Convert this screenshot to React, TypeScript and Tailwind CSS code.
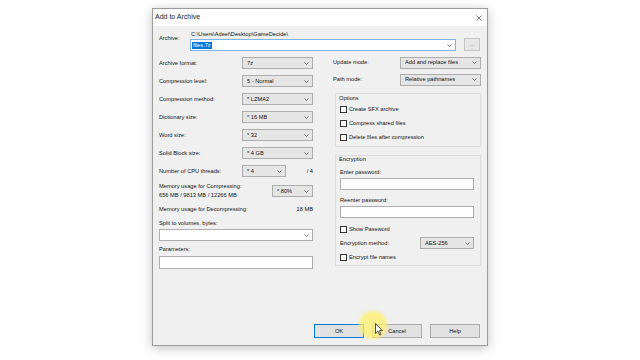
import React from 'react';

const font = { fontFamily: '"Liberation Sans", Arial, sans-serif' };

function Chevron() {
  return (
    <svg width="5" height="3" viewBox="0 0 5 3" className="shrink-0">
      <polyline points="0.5,0.5 2.5,2.5 4.5,0.5" fill="none" stroke="#555" strokeWidth="0.8" />
    </svg>
  );
}

function Select({ value, className = '' }: { value: string; className?: string }) {
  return (
    <div className={`h-[12px] bg-[#e5e5e5] border border-[#adadad] flex items-center justify-between pl-[4px] pr-[3px] ${className}`}>
      <span className="truncate">{value}</span>
      <Chevron />
    </div>
  );
}

function Check({ label }: { label: string }) {
  return (
    <div className="h-[14px] flex items-center gap-[2px]">
      <div className="w-[7px] h-[7px] bg-white border border-[#333]" />
      <span>{label}</span>
    </div>
  );
}

function Btn({ label, focused }: { label: string; focused?: boolean }) {
  return (
    <div
      className={`w-[50px] h-[14px] flex items-center justify-center bg-[#e1e1e1] border ${
        focused ? 'border-[#0078d7]' : 'border-[#adadad]'
      }`}
    >
      {label}
    </div>
  );
}

const leftRows = [
  ['Archive format:', '7z'],
  ['Compression level:', '5 - Normal'],
  ['Compression method:', '* LZMA2'],
  ['Dictionary size:', '* 16 MB'],
  ['Word size:', '* 32'],
  ['Solid Block size:', '* 4 GB'],
];

export default function App() {
  return (
    <div className="w-[640px] h-[360px] bg-white relative overflow-hidden text-[5.7px] text-[#111]" style={font}>
      <div className="ml-[152px] mt-[8px] w-[336px] h-[338px] border border-[#9c9c9c] shadow-[0_2px_10px_rgba(0,0,0,0.25)] flex flex-col">
        {/* Title bar */}
        <div className="h-[17px] bg-white flex items-center justify-between pl-[2px] pr-[5px] shrink-0">
          <span className="text-[7px] text-[#222]">Add to Archive</span>
          <svg width="6" height="6" viewBox="0 0 6 6">
            <path d="M0.5 0.5 L5.5 5.5 M5.5 0.5 L0.5 5.5" stroke="#444" strokeWidth="0.7" />
          </svg>
        </div>

        {/* Body */}
        <div className="flex-1 bg-[#f0f0f0] flex flex-col pl-[6px] pr-[6px]">
          {/* Archive row */}
          <div className="mt-[4px] flex">
            <div className="w-[31px] pt-[4px] leading-[9px]">Archive:</div>
            <div className="flex flex-col">
              <div className="h-[9px] leading-[9px] pl-[1px]">C:\Users\Adeel\Desktop\GameDecide\</div>
              <div className="w-[266px] h-[12px] bg-white border border-[#7eb4ea] flex items-center justify-between pl-[1px] pr-[3px]">
                <span className="bg-[#0078d7] text-white px-[1px] leading-[7px]">files.7z</span>
                <Chevron />
              </div>
            </div>
            <div className="ml-[8px] mt-[8px] w-[16px] h-[13px] bg-[#e6e6e6] border border-[#c4c4c4] flex items-center justify-center text-[#888]">
              ...
            </div>
          </div>

          <div className="mt-[3px] flex gap-[20px]">
            {/* Left column */}
            <div className="w-[154px] flex flex-col">
              {leftRows.map(([label, value]) => (
                <div key={label} className="h-[18px] flex items-center">
                  <span className="w-[83px]">{label}</span>
                  <Select value={value} className="w-[71px]" />
                </div>
              ))}
              <div className="h-[18px] flex items-center">
                <span className="w-[83px]">Number of CPU threads:</span>
                <Select value="* 4" className="w-[44px]" />
                <span className="ml-auto">/ 4</span>
              </div>

              <div className="h-[20px] flex">
                <div className="pt-[1.5px] leading-[9px]">
                  <div>Memory usage for Compressing:</div>
                  <div>656 MB / 9813 MB / 12266 MB</div>
                </div>
                <Select value="* 80%" className="w-[41px] ml-auto mt-[5px]" />
              </div>
              <div className="mt-[4px] h-[10px] flex items-center justify-between">
                <span>Memory usage for Decompressing:</span>
                <span>18 MB</span>
              </div>

              <div className="mt-[4px] h-[10px] flex items-center">Split to volumes, bytes:</div>
              <div className="mt-[1px] h-[12px] bg-white border border-[#adadad] flex items-center justify-end pr-[3px]">
                <Chevron />
              </div>

              <div className="mt-[3px] h-[10px] flex items-center">Parameters:</div>
              <div className="mt-[2px] h-[13px] bg-white border border-[#adadad]" />
            </div>

            {/* Right column */}
            <div className="w-[148px] flex flex-col">
              <div className="h-[17px] flex items-center">
                <span className="w-[67px]">Update mode:</span>
                <Select value="Add and replace files" className="w-[81px]" />
              </div>
              <div className="h-[17px] flex items-center">
                <span className="w-[67px]">Path mode:</span>
                <Select value="Relative pathnames" className="w-[81px]" />
              </div>

              <div className="mt-[5px] ml-[2px] w-[146px] h-[54px] border border-[#dcdcdc] pl-[4px] flex flex-col">
                <div className="h-[8px] leading-[8px] -ml-[1px]">Options</div>
                <Check label="Create SFX archive" />
                <Check label="Compress shared files" />
                <Check label="Delete files after compression" />
              </div>

              <div className="mt-[8px] ml-[2px] w-[146px] border border-[#dcdcdc] pl-[4px] pr-[6px] pb-[1px] flex flex-col">
                <div className="h-[6px] leading-[6px] -ml-[1px]">Encryption</div>
                <div className="mt-[6px] h-[8px] leading-[8px]">Enter password:</div>
                <div className="mt-[2px] h-[12px] bg-white border border-[#adadad]" />
                <div className="mt-[6px] h-[8px] leading-[8px]">Reenter password:</div>
                <div className="mt-[2px] h-[12px] bg-white border border-[#adadad]" />
                <div className="mt-[4px]">
                  <Check label="Show Password" />
                </div>
                <div className="h-[14px] flex items-center">
                  <span className="w-[80px]">Encryption method:</span>
                  <Select value="AES-256" className="w-[54px]" />
                </div>
                <Check label="Encrypt file names" />
              </div>
            </div>
          </div>

          <div className="flex-1" />

          {/* Buttons */}
          <div className="mb-[7px] pr-[1px] flex justify-end gap-[8px]">
            <Btn label="OK" focused />
            <Btn label="Cancel" />
            <Btn label="Help" />
          </div>
        </div>
      </div>

      {/* Mouse cursor highlight */}
      <div className="absolute left-[359px] top-[311px] w-[28px] h-[28px] rounded-full bg-[#fff06a]/75 blur-[1.5px]" />
      <svg className="absolute left-[375px] top-[323px]" width="8" height="13" viewBox="0 0 8 13">
        <path d="M0.5 0.5 L0.5 10.5 L3 8.2 L4.6 12 L6 11.4 L4.4 7.6 L7.5 7.6 Z" fill="white" stroke="#222" strokeWidth="0.8" />
      </svg>
    </div>
  );
}
